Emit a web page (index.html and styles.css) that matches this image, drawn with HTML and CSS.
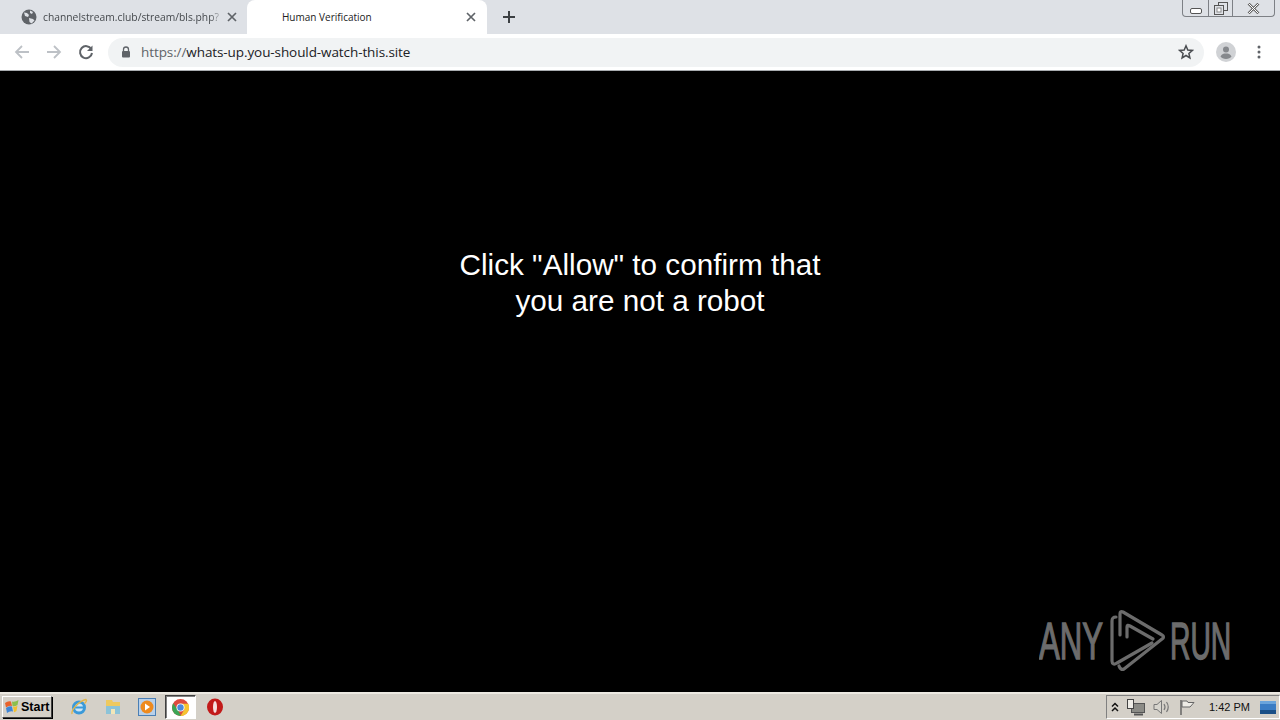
FILE: index.html
```html
<!DOCTYPE html>
<html lang="en">
<head>
<meta charset="utf-8">
<title>Human Verification</title>
<link rel="stylesheet" href="styles.css">
</head>
<body>
<div class="app">
  <header class="tabstrip">
    <div class="tab inactive">
      <svg class="globe" width="16" height="16" viewBox="0 0 16 16"><circle cx="8" cy="8" r="7.5" fill="#5f6368"/><path d="M3 3.5l3 .5 2 2-1 2-3-1zM9 1.5l3 1.500-1 2-2-1zM8 9l4 1 1.500 1.500-3 3-2-1.500z" fill="#dee1e6"/></svg>
      <span class="tab-title fade">channelstream.club/stream/bls.php?</span>
      <svg class="close" width="10" height="10" viewBox="0 0 10 10"><path d="M1 1l8 8M9 1l-8 8" stroke="#5f6368" stroke-width="1.700"/></svg>
    </div>
    <div class="tab active">
      <span class="tab-title">Human Verification</span>
      <svg class="close" width="10" height="10" viewBox="0 0 10 10"><path d="M1 1l8 8M9 1l-8 8" stroke="#5f6368" stroke-width="1.700"/></svg>
    </div>
    <svg class="newtab" width="12" height="12" viewBox="0 0 12 12"><path d="M6 0v12M0 6h12" stroke="#3c4043" stroke-width="2"/></svg>
    <div class="wincontrols">
      <div class="winbtn min"><svg width="12" height="6" viewBox="0 0 12 6"><rect x=".5" y=".5" width="11" height="5" rx="1.500" fill="#fff" stroke="#555"/></svg></div>
      <div class="winbtn max"><svg width="14" height="13" viewBox="0 0 14 13"><rect x="4.500" y=".5" width="9" height="8" fill="none" stroke="#555"/><rect x=".5" y="3.500" width="9" height="9" fill="#dee1e6" stroke="#555"/><rect x="3" y="6" width="4" height="4" fill="#fff" stroke="#888"/></svg></div>
      <div class="winbtn cls"><svg width="13" height="11" viewBox="0 0 13 11"><path d="M1.500 .5l10 10M11.500 .5l-10 10" stroke="#666" stroke-width="2.600"/><path d="M1.500 .5l10 10M11.500 .5l-10 10" stroke="#fff" stroke-width="1"/></svg></div>
    </div>
  </header>

  <nav class="toolbar">
    <svg class="navicon" width="16" height="16" viewBox="0 0 16 16"><path d="M15 8H2M8 2L2 8l6 6" fill="none" stroke="#bdc1c6" stroke-width="1.800"/></svg>
    <svg class="navicon" width="16" height="16" viewBox="0 0 16 16"><path d="M1 8h13M8 2l6 6-6 6" fill="none" stroke="#bdc1c6" stroke-width="1.800"/></svg>
    <svg class="navicon" width="16" height="16" viewBox="0 0 16 16"><path d="M13.300 5.200A6 6 0 1 0 14 9" fill="none" stroke="#5f6368" stroke-width="2"/><path d="M14.500 1.500v5.500H9z" fill="#5f6368"/></svg>
    <div class="omnibox">
      <svg class="lock" width="10" height="12" viewBox="0 0 10 12"><path d="M2.500 5V3.500a2.500 2.500 0 0 1 5 0V5" fill="none" stroke="#5f6368" stroke-width="1.300"/><rect x="1" y="5" width="8" height="6.500" rx="1" fill="#5f6368"/></svg>
      <span class="url"><span class="scheme">https://</span>whats-up.you-should-watch-this.site</span>
      <svg class="star" width="16" height="16" viewBox="0 0 16 16"><path d="M8 1.800l1.800 4.200 4.500.4-3.400 3 1 4.500L8 11.500l-3.900 2.400 1-4.500-3.400-3 4.500-.4z" fill="none" stroke="#4a4d51" stroke-width="1.500"/></svg>
    </div>
    <svg class="avatar" width="20" height="20" viewBox="0 0 20 20"><circle cx="10" cy="10" r="10" fill="#d0d2d5"/><circle cx="10" cy="7.500" r="3" fill="#85888c"/><path d="M4.500 14.500c1-2.500 3.500-3 5.500-3s4.500.5 5.500 3c-1 1.500-3 2.500-5.500 2.500s-4.500-1-5.500-2.500z" fill="#85888c"/></svg>
    <svg class="menu" width="4" height="14" viewBox="0 0 4 14"><circle cx="2" cy="2" r="1.500" fill="#5f6368"/><circle cx="2" cy="7" r="1.500" fill="#5f6368"/><circle cx="2" cy="12" r="1.500" fill="#5f6368"/></svg>
  </nav>

  <main class="page">
    <h1 class="message">Click "Allow" to confirm that<br>you are not a robot</h1>
    <svg class="watermark" width="210" height="70" viewBox="0 0 210 70">
      <text transform="translate(0 54) scale(.61 1)" class="wm-text">ANY</text>
      <g class="wm-mark">
        <path d="M77 12c-3 0-4 1-4 4v40c0 3 2 4 5 2l35-20"/>
        <path d="M81 30V9c0-2 1-3 3-2l39 23c2 1 2 3 0 4L85 64c-2 1-4 0-5-3"/>
        <path d="M88 32V22c0-2 1-2 3-1l23 13"/>
      </g>
      <text transform="translate(131 54) scale(.554 1)" class="wm-text">RUN</text>
    </svg>
  </main>

  <footer class="taskbar">
    <button class="start">
      <svg width="17" height="16" viewBox="0 0 17 16"><path d="M1 4q3-2.500 6-1.500L8 7Q5 6 2 8.500z" fill="#e8632c"/><path d="M8 2.500q3 1 6.500-1.500L13.500 6q-3 2-5 1z" fill="#8cbf4c"/><path d="M2 9q3-2.500 6-1.500l1 5q-3-1-6 1.500z" fill="#3f86d6"/><path d="M9 7.500q2.500 1 4.500-1l-1 5.500q-2 1.500-2.500 1z" fill="#f3c02f"/></svg>
      <span>Start</span>
    </button>
    <div class="quick">
      <span class="qi"><svg width="18" height="18" viewBox="0 0 18 18"><circle cx="9" cy="9.500" r="5.500" fill="#cfe6f5" stroke="#3b9ad9" stroke-width="3"/><path d="M5 9.500h9" stroke="#3b9ad9" stroke-width="2"/><path d="M2 16C1 12 9 3 16 1.500c1.500 1-.5 3-1.500 4" fill="none" stroke="#e3b64a" stroke-width="1.400"/></svg></span>
      <span class="qi"><svg width="18" height="18" viewBox="0 0 18 18"><path d="M2 2h6l1 2h7v12H2z" fill="#eec95f"/><path d="M2 8h14v8H2z" fill="#8cc3d8"/><path d="M7 16v-5h4v5z" fill="#f2e6b8"/></svg></span>
      <span class="qi"><svg width="18" height="18" viewBox="0 0 18 18"><rect x=".5" y=".5" width="17" height="17" fill="#b8d0ea" stroke="#4a7fb5"/><circle cx="9" cy="9" r="6.500" fill="#ee8a1e"/><path d="M7 5.500l5 3.500-5 3.500z" fill="#fff"/></svg></span>
      <span class="qi chrome-active"><svg width="17" height="17" viewBox="0 0 16 16"><circle cx="8" cy="8" r="8" fill="#dd4b3e"/><path d="M8 16a8 8 0 0 1-6.900-12L5 9.500 8.500 16z" fill="#3ba555"/><path d="M8 4.500h7.300A8 8 0 0 1 8 16l3.500-6z" fill="#f5c431"/><circle cx="8" cy="8" r="3.800" fill="#fff"/><circle cx="8" cy="8" r="3" fill="#4a89dc"/></svg></span>
      <span class="qi"><svg width="16" height="18" viewBox="0 0 16 18"><ellipse cx="8" cy="9" rx="8" ry="8.500" fill="#c21a1a"/><ellipse cx="8" cy="9" rx="2" ry="6" fill="#f6e0e0"/></svg></span>
    </div>
    <div class="tray">
      <svg width="8" height="10" viewBox="0 0 8 10"><path d="M1 4.500l3-3 3 3M1 9l3-3 3 3" fill="none" stroke="#111" stroke-width="1.500"/></svg>
      <svg width="18" height="17" viewBox="0 0 18 17"><rect x="4.500" y="4.500" width="13" height="9" fill="#8b8b86" stroke="#555"/><path d="M7 15.500h9" stroke="#555" stroke-width="2"/><rect x=".5" y=".5" width="6" height="9" fill="#eeece6" stroke="#444"/></svg>
      <svg width="18" height="16" viewBox="0 0 18 16"><path d="M1 5.500h3L8.500 1.500v13L4 10.500H1z" fill="#d6d4cd" stroke="#777"/><path d="M11 5q2 3 0 6M13.500 3q3.500 5 0 10" fill="none" stroke="#777" stroke-width="1.200"/></svg>
      <svg width="16" height="16" viewBox="0 0 16 16"><path d="M2 1v15" stroke="#555" stroke-width="1.300"/><path d="M3 2h5l1 1.500h6L11 8H3z" fill="#eeece6" stroke="#666"/></svg>
      <span class="clock">1:42 PM</span>
      <svg class="showdesk" width="16" height="13" viewBox="0 0 16 13"><rect width="16" height="13" fill="#3a7cc4"/><rect y="9" width="16" height="4" fill="#1a4f86"/><rect width="16" height="3" fill="#6aa4dc"/></svg>
    </div>
  </footer>
</div>
</body>
</html>
```

FILE: styles.css
```css
* { box-sizing: border-box; }
html, body { margin: 0; padding: 0; height: 720px; overflow: hidden; }
body { font-family: "Liberation Sans", Arial, sans-serif; }
.app { display: flex; flex-direction: column; width: 1280px; height: 720px; background: #000; }

.tabstrip { flex: 0 0 34px; display: flex; align-items: center; background: #dee1e6; position: relative; padding-left: 8px; }
.tab { display: flex; align-items: center; height: 34px; font-family: "Open Sans", sans-serif; color: #3c4043; }
.tab.inactive { width: 239px; padding: 0 10px 0 13px; font-size: 10.300px; }
.tab.active { width: 240px; padding: 0 11px 0 35px; background: #fff; border-radius: 8px 8px 0 0; color: #222; font-size: 10px; }
.globe { flex: none; margin-right: 6px; }
.tab-title { flex: 1; white-space: nowrap; overflow: hidden; }
.fade { color: #45494d; -webkit-mask-image: linear-gradient(to right, #000 92%, transparent 100%); mask-image: linear-gradient(to right, #000 92%, transparent 100%); }
.close { flex: none; }
.inactive .close { margin-left: 3px; }
.newtab { margin-left: 16px; }

.wincontrols { position: absolute; top: 0; right: 5px; height: 17px; display: flex; border: 1px solid #7d8085; border-top: 0; border-radius: 0 0 4px 4px; }
.winbtn { display: flex; align-items: center; justify-content: center; height: 16px; }
.winbtn + .winbtn { border-left: 1px solid #7d8085; }
.min { width: 25px; padding-top: 6px; }
.max { width: 24px; }
.cls { width: 42px; }

.toolbar { flex: 0 0 37px; display: flex; align-items: center; background: #fff; padding-left: 14px; border-bottom: 1px solid #a8abaf; }
.navicon { flex: none; margin-right: 16px; }
.omnibox { width: 1096px; height: 29px; margin-left: -2px; display: flex; align-items: center; padding: 0 10px 0 13px; background: #f1f3f4; border-radius: 15px; }
.lock { flex: none; margin-right: 10px; }
.url { flex: 1; font-family: "Open Sans", sans-serif; font-size: 13.500px; color: #202124; letter-spacing: -.09px; white-space: nowrap; }
.scheme { color: #5f6368; }
.avatar { flex: none; margin-left: 12px; }
.menu { flex: none; margin-left: 21px; }

.page { flex: 1; position: relative; display: flex; justify-content: center; background: #000; }
.message { margin: 176px 0 0; font-family: "Liberation Sans", Arial, sans-serif; font-size: 29.700px; line-height: 36px; font-weight: 400; color: #fff; text-align: center; white-space: nowrap; }
.watermark { position: absolute; left: 1039px; top: 534px; }
.wm-text { font-family: "Liberation Sans", Arial, sans-serif; font-size: 51px; fill: #6c6c6c; stroke: #6c6c6c; stroke-width: 1.400px; }
.wm-mark { fill: none; stroke: #6c6c6c; stroke-width: 3.200px; stroke-linecap: round; stroke-linejoin: round; }

.taskbar { flex: 0 0 28px; display: flex; align-items: center; background: #d4d0c8; border-top: 2px solid #ece9e2; padding-left: 2px; }
.start { display: flex; align-items: center; gap: 0; width: 50px; height: 22px; padding: 0 0 0 1px; background: #d4d0c8; border: 1px solid; border-color: #fff #404040 #404040 #fff; box-shadow: 1px 1px 0 #000; font: 700 12.500px "Liberation Sans", Arial, sans-serif; color: #000; }
.quick { display: flex; align-items: center; margin-left: 10px; }
.qi { display: flex; align-items: center; justify-content: center; width: 34px; height: 24px; }
.chrome-active { width: 31px; margin: 0 2px 0 1px; background: #fff; border: 1px solid; border-color: #404040 #fff #fff #404040; box-shadow: inset 1px 1px 0 #808080; }
.tray { display: flex; align-items: center; gap: 8px; margin-left: auto; width: 174px; height: 24px; padding-left: 4px; border: 1px solid; border-color: #808080 #fff #fff #808080; }
.clock { margin-left: 6px; font: 11px "Liberation Sans", Arial, sans-serif; color: #111; white-space: nowrap; }
.showdesk { margin-left: 2px; }
```
